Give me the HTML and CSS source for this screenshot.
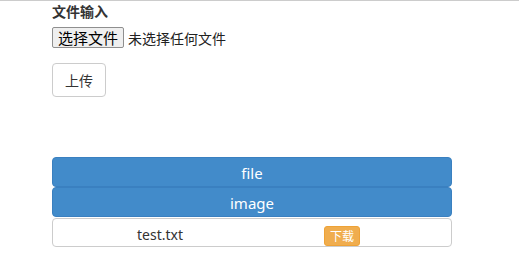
FILE: index.html
```html
<!DOCTYPE html>
<html lang="zh-CN">
<head>
<meta charset="utf-8">
<link rel="stylesheet" href="styles.css">
</head>
<body>
<div class="page">
  <form class="upload">
    <label class="field-label">文件输入</label>
    <div class="file-input">
      <span class="file-btn">选择文件</span>
      <span class="file-status">未选择任何文件</span>
    </div>
    <button type="button" class="btn-upload">上传</button>
  </form>
  <div class="list">
    <div class="bar">file</div>
    <div class="bar">image</div>
    <div class="item">
      <span class="item-name">test.txt</span>
      <span class="btn-download">下载</span>
    </div>
  </div>
</div>
</body>
</html>
```
FILE: styles.css
```css
html, body {
  margin: 0;
  padding: 0;
  background: #fff;
}
body {
  border-top: 1px solid #cccccc;
  font-family: "Noto Sans", "Noto Sans CJK SC", sans-serif;
  font-size: 14px;
  color: #333;
}
.page {
  width: 400px;
  padding-left: 52px;
}
.upload {
  display: flex;
  flex-direction: column;
  align-items: flex-start;
}
.field-label {
  font-weight: bold;
  font-size: 14px;
  line-height: 20px;
  height: 20px;
  margin-top: 0;
  font-family: "Noto Sans CJK SC", sans-serif;
}
.file-input {
  margin-top: 6px;
  display: flex;
  align-items: center;
  height: 21px;
  font-family: "Noto Sans CJK SC", sans-serif;
  font-size: 14px;
  color: #222;
}
.file-btn {
  box-sizing: border-box;
  height: 21px;
  line-height: 19px;
  padding: 0 5px;
  border: 1px solid #8f8f8f;
  border-radius: 2px;
  background: #efefef;
  color: #000;
  font-size: 15px;
  width: 72px;
  text-align: center;
}
.file-status {
  margin-left: 4px;
  color: #222;
}
.btn-upload {
  margin-top: 15px;
  box-sizing: border-box;
  height: 34px;
  width: 54px;
  padding: 0;
  border: 1px solid #cccccc;
  border-radius: 4px;
  background: #fff;
  color: #333;
  font-family: "Noto Sans CJK SC", sans-serif;
  font-size: 14px;
  line-height: 32px;
}
.list {
  margin-top: 60px;
  display: flex;
  flex-direction: column;
}
.bar {
  box-sizing: border-box;
  height: 30px;
  line-height: 31px;
  border: 1px solid #3a80c0;
  border-radius: 4px;
  background: #428bca;
  color: #fff;
  text-align: center;
  font-size: 15px;
}
.item {
  margin-top: 1px;
  box-sizing: border-box;
  height: 29px;
  border: 1px solid #cccccc;
  border-radius: 4px;
  background: #fff;
  display: flex;
  align-items: center;
  padding-left: 84px;
}
.item-name {
  font-size: 14px;
  color: #333;
  width: 187px;
  margin-top: 3px;
}
.btn-download {
  box-sizing: border-box;
  height: 20px;
  line-height: 18px;
  width: 36px;
  text-align: center;
  background: #f0ad4e;
  border: 1px solid #eea236;
  border-radius: 3px;
  color: #fff;
  font-size: 12px;
  font-family: "Noto Sans CJK SC", sans-serif;
  margin-top: 6px;
}
```
